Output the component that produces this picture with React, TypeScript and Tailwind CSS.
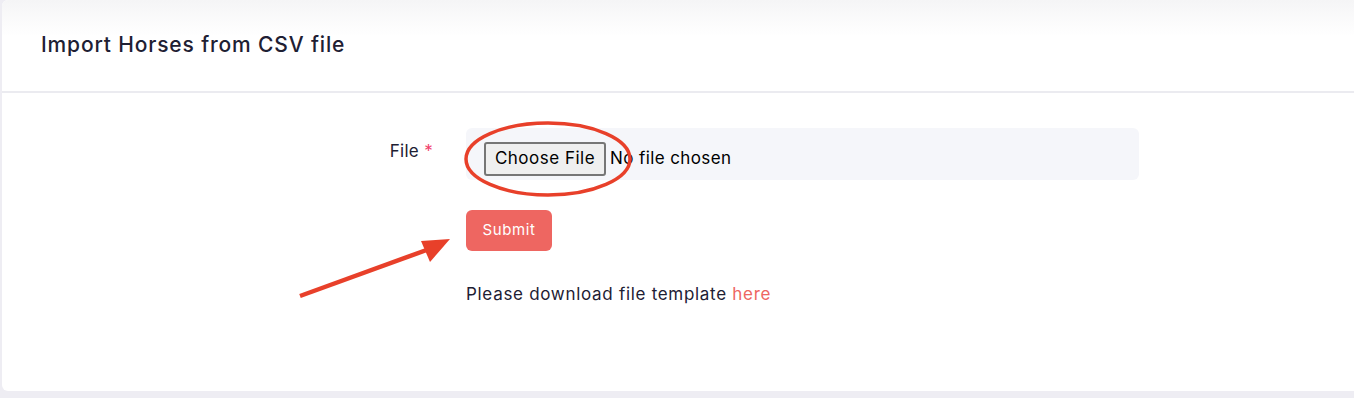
export default function App() {
  return (
    <div className="relative min-h-[398px] w-[1354px] overflow-hidden bg-[#eeedf3] pl-[2px] pb-[7px] font-['Inter',sans-serif] text-[#1e2033]">
      <div className="h-[391px] rounded-l-[6px] bg-white">
        {/* card header */}
        <div className="flex h-[93px] items-center border-b-2 border-[#ebebf0] bg-gradient-to-b from-[#f5f5f6] to-white to-40% rounded-tl-[6px] pl-[39px] pb-[1px]">
          <h1 className="text-[21px] font-medium tracking-[0.85px]">Import Horses from CSV file</h1>
        </div>

        {/* card body */}
        <div className="pt-[35px]">
          <div className="flex">
            <label className="w-[431px] pt-[11px] text-right text-[17px] tracking-[0.3px]">
              File <span className="text-[#f1416c]">*</span>
            </label>
            <div className="ml-[33px] flex h-[52px] w-[673px] items-start rounded-[6px] bg-[#f5f6fa] pl-[18px] pt-[14px]">
              <span className="flex h-[34px] w-[122px] items-center justify-center rounded-[3px] border-2 border-[#767676] bg-[#efefef] text-[17px] tracking-[0.5px] text-black">
                Choose File
              </span>
              <span className="ml-[4px] flex h-[34px] items-center text-[17px] tracking-[0.4px] text-black">No file chosen</span>
            </div>
          </div>

          <div className="ml-[464px] mt-[30px]">
            <button className="h-[41px] w-[86px] rounded-[6px] bg-[#ee6661] text-[15px] tracking-[0.6px] text-white">Submit</button>
            <p className="mt-[31px] text-[17px] tracking-[0.7px]">
              Please download file template <a className="text-[#ee6661]">here</a>
            </p>
          </div>
        </div>
      </div>

      {/* red annotations */}
      <svg className="pointer-events-none absolute left-0 top-0" width="1354" height="398">
        <ellipse cx="548" cy="159" rx="82" ry="36" fill="none" stroke="#e8402a" strokeWidth="3.5" />
        <line x1="300" y1="296" x2="432" y2="248" stroke="#e8402a" strokeWidth="4.5" />
        <polygon points="450,239 421,241 430,262" fill="#e8402a" />
      </svg>
    </div>
  );
}
